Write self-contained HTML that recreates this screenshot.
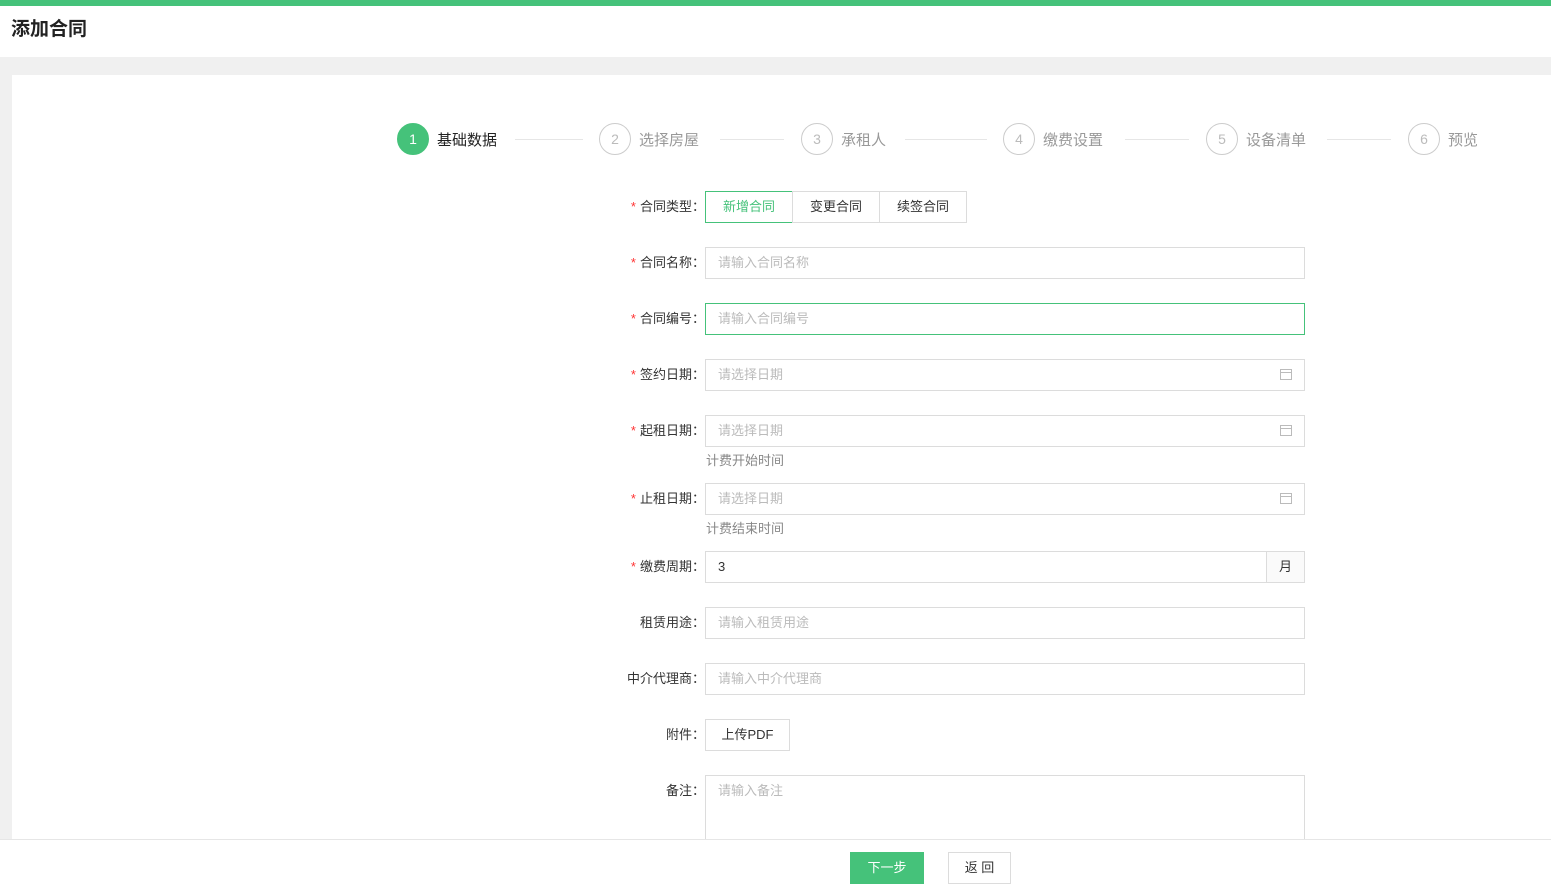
<!DOCTYPE html>
<html><head><meta charset="utf-8"><style>
*{box-sizing:border-box;margin:0;padding:0}
body{width:1551px;height:894px;overflow:hidden;background:#f0f0f0;font-family:"Liberation Sans","Noto Sans CJK SC",sans-serif;font-size:13px;color:#333;position:relative}
.top{position:absolute;left:0;top:0;width:1551px;height:6px;background:#45c27a}
.hd{position:absolute;left:0;top:6px;width:1551px;height:51px;background:#fff}
.hd h1{position:absolute;left:11px;top:8px;font-size:19px;font-weight:bold;color:#222}
.card{position:absolute;left:12px;top:75px;width:1539px;height:819px;background:#fff}
.c{position:absolute;width:32px;height:32px;border-radius:50%;border:1px solid #ccc;color:#bbb;text-align:center;line-height:30px;font-size:14px;top:123px}
.c.a{background:#45c27a;border-color:#45c27a;color:#fff}
.sl{position:absolute;top:129px;font-size:15px;color:#999}
.sl.a{color:#222}
.ln{position:absolute;top:139px;height:1px;background:#e6e6e6}
.lb{position:absolute;width:200px;left:505px;text-align:right;line-height:32px}
.lb i{color:#f33;font-style:normal;margin-right:4px}
.in{position:absolute;left:705px;width:600px;height:32px;border:1px solid #dcdcdc;padding-left:12px;line-height:30px;color:#bbb}
.hint{position:absolute;left:706px;color:#888;font-size:13px}
.cal{position:absolute;right:12px;top:9px;width:12px;height:11px;border:1px solid #bbb}
.cal:before{content:"";position:absolute;left:0;right:0;top:2px;border-top:1px solid #bbb}
.btn{position:absolute;height:32px;border:1px solid #dcdcdc;line-height:30px;text-align:center;color:#333}
.ft{position:absolute;left:0;top:839px;width:1551px;height:55px;background:#fff;border-top:1px solid #e6e6e6}
</style></head><body>
<div class="top"></div>
<div class="hd"><h1>添加合同</h1></div>
<div class="card"></div>
<div class="c a" style="left:397px">1</div><div class="sl a" style="left:437px">基础数据</div><div class="ln" style="left:515px;width:68px"></div>
<div class="c" style="left:599px">2</div><div class="sl" style="left:639px">选择房屋</div><div class="ln" style="left:720px;width:64px"></div>
<div class="c" style="left:801px">3</div><div class="sl" style="left:841px">承租人</div><div class="ln" style="left:905px;width:82px"></div>
<div class="c" style="left:1003px">4</div><div class="sl" style="left:1043px">缴费设置</div><div class="ln" style="left:1125px;width:64px"></div>
<div class="c" style="left:1206px">5</div><div class="sl" style="left:1246px">设备清单</div><div class="ln" style="left:1327px;width:64px"></div>
<div class="c" style="left:1408px">6</div><div class="sl" style="left:1448px">预览</div>

<div class="lb" style="top:191px"><i>*</i>合同类型：</div>
<div class="btn" style="left:705px;top:191px;width:88px;border-color:#45c27a;color:#45c27a">新增合同</div>
<div class="btn" style="left:792px;top:191px;width:88px">变更合同</div>
<div class="btn" style="left:879px;top:191px;width:88px">续签合同</div>

<div class="lb" style="top:247px"><i>*</i>合同名称：</div><div class="in" style="top:247px">请输入合同名称</div>
<div class="lb" style="top:303px"><i>*</i>合同编号：</div><div class="in" style="top:303px;border-color:#45c27a">请输入合同编号</div>
<div class="lb" style="top:359px"><i>*</i>签约日期：</div><div class="in" style="top:359px">请选择日期<span class="cal"></span></div>
<div class="lb" style="top:415px"><i>*</i>起租日期：</div><div class="in" style="top:415px">请选择日期<span class="cal"></span></div>
<div class="hint" style="top:450px">计费开始时间</div>
<div class="lb" style="top:483px"><i>*</i>止租日期：</div><div class="in" style="top:483px">请选择日期<span class="cal"></span></div>
<div class="hint" style="top:518px">计费结束时间</div>
<div class="lb" style="top:551px"><i>*</i>缴费周期：</div><div class="in" style="top:551px;color:#333">3<span style="position:absolute;right:0;top:0;width:38px;height:30px;border-left:1px solid #dcdcdc;background:#fafafa;text-align:center">月</span></div>
<div class="lb" style="top:607px">租赁用途：</div><div class="in" style="top:607px">请输入租赁用途</div>
<div class="lb" style="top:663px">中介代理商：</div><div class="in" style="top:663px">请输入中介代理商</div>
<div class="lb" style="top:719px">附件：</div><div class="btn" style="left:705px;top:719px;width:85px">上传PDF</div>
<div class="lb" style="top:775px">备注：</div><div class="in" style="top:775px;height:80px">请输入备注</div>

<div class="ft">
<div class="btn" style="left:850px;top:12px;width:74px;background:#45c27a;border-color:#45c27a;color:#fff">下一步</div>
<div class="btn" style="left:948px;top:12px;width:63px">返 回</div>
</div>
</body></html>
